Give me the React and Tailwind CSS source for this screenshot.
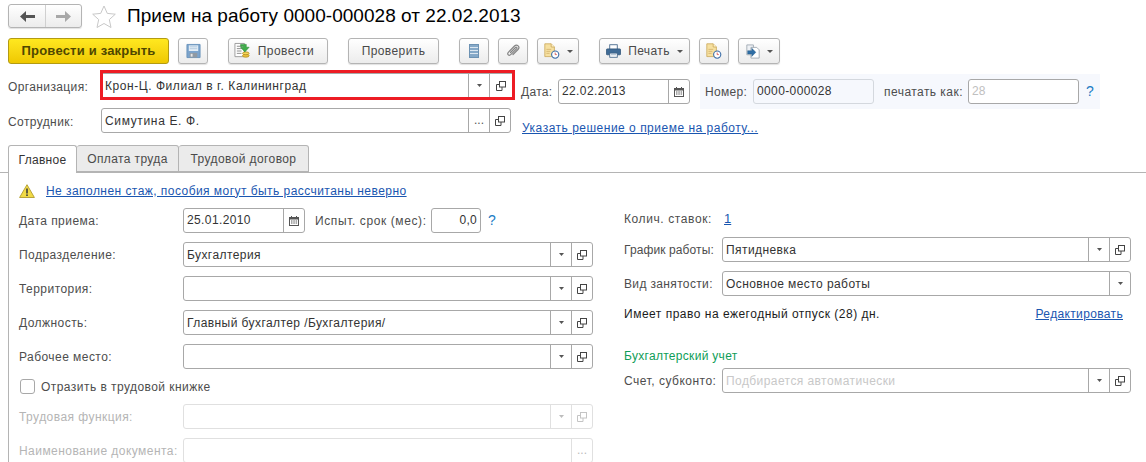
import React from 'react';

const Caret = ({ muted, big }) => (
  <svg width={big ? 6 : 5} height="3" viewBox="0 0 6 3" preserveAspectRatio="none"><path d="M0 0h6L3 3z" fill={muted ? '#bdbdbd' : '#555'} /></svg>
);

const OpenIcon = ({ muted }) => (
  <svg width="10" height="10" viewBox="0 0 10 10" fill="none" stroke={muted ? '#c4c4c4' : '#444'}>
    <rect x="3.500" y="0.500" width="6" height="5.500" />
    <path d="M3.500 3.500H.5v6h5.500V6" />
  </svg>
);

const CalendarIcon = () => (
  <svg width="10" height="10" viewBox="0 0 10 10">
    <rect x="0.500" y="1.500" width="9" height="8" fill="#fff" stroke="#555" />
    <rect x="0.500" y="1" width="9" height="2.500" fill="#555" />
    <rect x="2" y="0" width="1" height="2" fill="#555" />
    <rect x="7" y="0" width="1" height="2" fill="#555" />
    <path d="M2 5h1.500M4.300 5h1.500M6.600 5h1.500M2 7h1.500M4.300 7h1.500M6.600 7h1.500" stroke="#555" />
  </svg>
);

const Star = () => (
  <svg width="24" height="23" viewBox="0 0 24 23" fill="#fff" stroke="#c8c8c8">
    <path d="M12 1l3.300 7.400 8 .8-6 5.400 1.700 7.900L12 18.500 5 22.500l1.700-7.900-6-5.400 8-.8z" />
  </svg>
);

const SaveIcon = () => (
  <svg width="15" height="16" viewBox="0 0 16 16">
    <path d="M1 1h14v14H1z" fill="#7ba4cd" stroke="#6b94bc" />
    <rect x="3" y="2" width="10" height="6" fill="#e3edf6" />
    <path d="M4 3.500h8M4 5.500h8" stroke="#b3cade" />
    <rect x="4" y="10" width="8" height="5" fill="#8f99a3" />
    <rect x="5" y="11" width="2" height="3" fill="#e6e6e6" />
  </svg>
);

const PostIcon = () => (
  <svg width="17" height="18" viewBox="0 0 18 18">
    <path d="M1 1h10v14H1z" fill="#fff" stroke="#9a9a9a" />
    <path d="M3 4h6M3 6.500h6M3 9h5M3 11.500h5" stroke="#8a8a8a" />
    <ellipse cx="12.500" cy="14" rx="3.500" ry="1.500" fill="#f0c63a" stroke="#b9932a" />
    <ellipse cx="12.500" cy="11.500" rx="3.500" ry="1.500" fill="#f6d65a" stroke="#b9932a" />
    <path d="M7 2h6v3h3l-4.500 5L7 5h3V4H7z" fill="#3fae49" stroke="#2b8a35" strokeWidth="0.600" />
  </svg>
);

const ListIcon = () => (
  <svg width="10" height="14" viewBox="0 0 10 14">
    <rect x="0.500" y="0.500" width="9" height="13" fill="#86a9c8" stroke="#6d92b3" />
    <path d="M1 3.500h8M1 6.500h8M1 9.500h8" stroke="#dce7f1" />
  </svg>
);

const ClipIcon = () => (
  <svg width="14" height="14" viewBox="0 0 14 14" fill="none" stroke="#858585" strokeWidth="1.200" strokeLinecap="round">
    <path d="M4.500 8.500l5-5c.8-.8 2 .3 1.200 1.200l-6 6c-1.700 1.700-4-.6-2.400-2.400L8.500 2c2.500-2.500 6 1 3.500 3.500l-5 5" />
  </svg>
);

const NoteClockIcon = () => (
  <svg width="16" height="16" viewBox="0 0 20 20">
    <path d="M1 1h8l4 4v12H1z" fill="#f6e0a0" stroke="#c9a758" />
    <path d="M9 1v4h4" fill="#fff3cf" stroke="#c9a758" />
    <path d="M3 8h6M3 10.500h5M3 13h4" stroke="#d3b46e" />
    <circle cx="14" cy="14.500" r="4.500" fill="#fff" stroke="#3e6fa8" strokeWidth="1.400" />
    <path d="M14 12v2.500h2" stroke="#d2453d" fill="none" />
  </svg>
);

const PrinterIcon = () => (
  <svg width="15" height="14" viewBox="0 0 18 16">
    <rect x="4.500" y="0.500" width="9" height="6" fill="#fff" stroke="#3a5f85" />
    <rect x="0.500" y="5.500" width="17" height="7" rx="1" fill="#3f6b96" stroke="#34587c" />
    <rect x="4.500" y="10.500" width="9" height="5" fill="#fff" stroke="#3a5f85" />
    <path d="M6 12.500h6" stroke="#8fa9c2" />
  </svg>
);

const DocArrowIcon = () => (
  <svg width="14" height="15" viewBox="0 0 17 18">
    <path d="M1 1h8v12H1z" fill="#eef1f5" stroke="#9aa3ad" />
    <path d="M6 4h7l3 3v10H6z" fill="#fff" stroke="#9aa3ad" />
    <path d="M2 8h5V5l5 5-5 5v-3H2z" fill="#2f6ea5" stroke="#245a88" strokeWidth="0.500" />
  </svg>
);

const WarnIcon = () => (
  <svg width="16" height="14" viewBox="0 0 16 14">
    <path d="M8 .7 15.400 13.500H.6z" fill="#f1da45" stroke="#b9a43a" strokeLinejoin="round" />
    <rect x="7.200" y="4.500" width="1.600" height="5" fill="#3c3c3c" />
    <rect x="7.200" y="10.400" width="1.600" height="1.600" fill="#3c3c3c" />
  </svg>
);

const ToolButton = ({ className, children }) => (
  <button className={`flex h-[26px] items-center justify-center rounded-[3px] border border-[#b4b4b4] bg-gradient-to-b from-white to-[#ececec] text-[#4a4a4a] tracking-[0.4px] shadow-[0_1px_1px_rgba(0,0,0,0.12)] ${className}`}>
    {children}
  </button>
);

const Cell = ({ className = 'border-[#a8a8a8]', children }) => (
  <div className={`flex w-[21px] shrink-0 items-center justify-center border-l ${className}`}>{children}</div>
);

const Field = ({ value, placeholder, className = '', disabled, arrow = true, open = true, dots }) => {
  const line = disabled ? 'border-[#e0e0e0]' : 'border-[#a8a8a8]';
  return (
    <div className={`flex h-[25px] items-stretch rounded-[3px] border bg-white ${line} ${className}`}>
      <div className="flex-1 truncate pl-[3px] leading-[25px] text-[#333] tracking-[0.42px]">
        {value}
        {placeholder && <span className="text-[#c8c8c8]">{placeholder}</span>}
      </div>
      {arrow && <Cell className={line}><Caret muted={disabled} /></Cell>}
      {dots && <Cell className={line}><span className={`pb-[1px] ${disabled ? 'text-[#bbb]' : 'text-[#555]'}`}>...</span></Cell>}
      {open && <Cell className={line}><OpenIcon muted={disabled} /></Cell>}
    </div>
  );
};

const DateField = ({ value, className }) => (
  <div className={`flex h-[25px] items-stretch rounded-[3px] border border-[#a8a8a8] bg-white ${className}`}>
    <div className="flex-1 pl-[3px] leading-[23px] text-[#333] tracking-[0.38px]">{value}</div>
    <Cell><CalendarIcon /></Cell>
  </div>
);

const FormRow = ({ label, muted, children, className = '' }) => (
  <div className={`flex h-[25px] items-center ${className}`}>
    <span className={`w-[164px] shrink-0 tracking-[0.45px] ${muted ? 'text-[#b5b5b5]' : 'text-[#4d4d4d]'}`}>{label}</span>
    {children}
  </div>
);

const RightRow = ({ label, labelClass = 'tracking-[0.45px]', children, className = '' }) => (
  <div className={`flex h-[25px] items-center ${className}`}>
    <span className={`w-[98px] shrink-0 text-[#4d4d4d] ${labelClass}`}>{label}</span>
    {children}
  </div>
);

const Help = ({ className = '' }) => (
  <span className={`text-[14px] text-[#1c7cc4] ${className}`}>?</span>
);

export default function App() {
  return (
    <div className="h-[462px] w-[1146px] overflow-hidden bg-white font-['Liberation_Sans',Arial,sans-serif] text-[12px]">
      {/* Title */}
      <div className="flex h-[38px] pl-[8px] pt-[4px]">
        <div className="flex h-[24px] w-[74px] rounded-[3px] border border-[#b4b4b4] bg-gradient-to-b from-white to-[#ececec] shadow-[0_1px_1px_rgba(0,0,0,0.12)]">
          <div className="flex w-[37px] items-center justify-center border-r border-[#d0d0d0]">
            <svg width="15" height="11" viewBox="0 0 15 11"><path d="M6 0v4h9v3H6v4L0 5.500z" fill="#555" /></svg>
          </div>
          <div className="flex flex-1 items-center justify-center">
            <svg width="15" height="11" viewBox="0 0 15 11"><path d="M9 0v4H0v3h9v4l6-5.500z" fill="#a8a8a8" /></svg>
          </div>
        </div>
        <div className="ml-[10px] mt-[1px]"><Star /></div>
        <h1 className="ml-[11px] text-[19px] leading-[24px] text-black tracking-[0.03px]">Прием на работу 0000-000028 от 22.02.2013</h1>
      </div>

      {/* Toolbar */}
      <div className="flex h-[26px] pl-[8px]">
        <button className="h-[26px] w-[161px] rounded-[3px] border border-[#b39b12] bg-gradient-to-b from-[#ffe81f] to-[#efc800] text-[13px] font-bold text-[#4f4700] tracking-[0.2px]">Провести и закрыть</button>
        <ToolButton className="ml-[9px] w-[30px]"><SaveIcon /></ToolButton>
        <ToolButton className="ml-[20px] w-[100px] gap-[7px] pr-[8px]"><PostIcon />Провести</ToolButton>
        <ToolButton className="ml-[20px] w-[91px]">Проверить</ToolButton>
        <ToolButton className="ml-[20px] w-[30px]"><ListIcon /></ToolButton>
        <ToolButton className="ml-[9px] w-[30px]"><ClipIcon /></ToolButton>
        <ToolButton className="ml-[9px] w-[42px] gap-[7px]"><NoteClockIcon /><Caret big /></ToolButton>
        <ToolButton className="ml-[20px] w-[91px] gap-[7px]"><PrinterIcon />Печать<Caret big /></ToolButton>
        <ToolButton className="ml-[9px] w-[30px]"><NoteClockIcon /></ToolButton>
        <ToolButton className="ml-[9px] w-[42px] gap-[7px]"><DocArrowIcon /><Caret big /></ToolButton>
      </div>

      {/* Header fields */}
      <div className="mt-[6px] flex pl-[8px]">
        <div className="w-[507px]">
          <div className="flex h-[30px] items-center">
            <span className="w-[92px] pt-[4px] tracking-[0.38px] text-[#4d4d4d]">Организация:</span>
            <div className="w-[415px] border-[3px] border-[#ed1c24]">
              <div className="flex h-[24px] items-stretch border-t border-[#a8a8a8] bg-white">
                <div className="flex-1 pl-[2px] leading-[25px] text-[#333] tracking-[0.55px]">Крон-Ц. Филиал в г. Калининград</div>
                <Cell><Caret /></Cell>
                <div className="flex w-[23px] shrink-0 items-center justify-center border-l border-[#a8a8a8]"><OpenIcon /></div>
              </div>
            </div>
          </div>
          <div className="mt-[8px] flex h-[25px] items-center">
            <span className="w-[93px] pt-[2px] tracking-[0.4px] text-[#4d4d4d]">Сотрудник:</span>
            <Field value={<span className="tracking-[0.65px]">Симутина Е. Ф.</span>} arrow={false} dots className="w-[410px]" />
          </div>
        </div>
        <div className="ml-[6px] flex-1">
          <div className="flex">
            <div className="flex h-[35px] items-center self-end">
              <span className="w-[37px] tracking-[0.3px] text-[#4d4d4d]">Дата:</span>
              <DateField value="22.02.2013" className="w-[132px]" />
            </div>
            <div className="ml-[10px] mt-[4px] flex h-[35px] w-[400px] items-center bg-[#f6f8fd] pl-[5px]">
              <span className="w-[48px] tracking-[0.3px] text-[#4d4d4d]">Номер:</span>
              <div className="h-[25px] w-[121px] rounded-[3px] border border-[#d4d8de] pl-[3px] leading-[23px] text-[#333] tracking-[0.38px]">0000-000028</div>
              <span className="ml-[10px] w-[84px] tracking-[0.45px] text-[#4d4d4d]">печатать как:</span>
              <div className="h-[25px] w-[111px] rounded-[3px] border border-[#a8a8a8] bg-white pl-[3px] leading-[23px] text-[#c0c0c0]">28</div>
              <Help className="ml-[7px]" />
            </div>
          </div>
          <a className="mt-[12px] block pl-px leading-[14px] text-[#1a56b0] underline tracking-[0.5px]">Указать решение о приеме на работу...</a>
        </div>
      </div>

      {/* Tabs */}
      <div className="mt-[10px] flex h-[28px] items-stretch border-b border-[#b4b4b4] pl-[8px]">
        <div className="z-10 -mb-px flex w-[69px] items-center justify-center rounded-t-[3px] border border-b-0 border-[#b4b4b4] bg-white text-[#333] tracking-[0.3px]">Главное</div>
        <div className="flex w-[102px] items-center justify-center rounded-t-[3px] border border-l-0 border-[#b4b4b4] bg-[#ebebeb] text-[#4a4a4a] tracking-[0.38px]">Оплата труда</div>
        <div className="flex w-[130px] items-center justify-center rounded-t-[3px] border border-l-0 border-[#b4b4b4] bg-[#ebebeb] text-[#4a4a4a] tracking-[0.4px]">Трудовой договор</div>
      </div>

      {/* Tab body */}
      <div className="ml-[8px] h-[300px] border-l border-[#b4b4b4] pl-[10px]">
        <div className="flex h-[35px] items-center">
          <WarnIcon />
          <a className="ml-[11px] text-[#1a56b0] underline tracking-[0.45px]">Не заполнен стаж, пособия могут быть рассчитаны неверно</a>
        </div>
        <div className="flex">
          <div className="w-[574px]">
            <FormRow label="Дата приема:">
              <DateField value="25.01.2010" className="w-[122px]" />
              <span className="ml-[10px] w-[116px] tracking-[0.6px] text-[#4d4d4d]">Испыт. срок (мес):</span>
              <div className="h-[25px] w-[50px] rounded-[3px] border border-[#a8a8a8] pr-[3px] text-right leading-[23px] text-[#333] tracking-[0.3px]">0,0</div>
              <Help className="ml-[7px]" />
            </FormRow>
            <FormRow label="Подразделение:" className="mt-[9px]"><Field value="Бухгалтерия" className="w-[410px]" /></FormRow>
            <FormRow label="Территория:" className="mt-[9px]"><Field className="w-[410px]" /></FormRow>
            <FormRow label="Должность:" className="mt-[9px]"><Field value="Главный бухгалтер /Бухгалтерия/" className="w-[410px]" /></FormRow>
            <FormRow label="Рабочее место:" className="mt-[9px]"><Field className="w-[410px]" /></FormRow>
            <div className="mt-[10px] flex h-[15px] items-center">
              <div className="ml-[1px] h-[15px] w-[15px] rounded-[3px] border border-[#a8a8a8] bg-white" />
              <span className="ml-[6px] tracking-[0.45px] text-[#4d4d4d]">Отразить в трудовой книжке</span>
            </div>
            <FormRow label="Трудовая функция:" muted className="mt-[10px]"><Field disabled className="w-[410px]" /></FormRow>
            <FormRow label="Наименование документа:" muted className="mt-[9px]"><Field disabled arrow={false} open={false} dots className="w-[411px]" /></FormRow>
          </div>
          <div className="ml-[31px] w-[507px]">
            <div className="flex h-[21px] items-center">
              <span className="w-[100px] tracking-[0.6px] text-[#4d4d4d]">Колич. ставок:</span>
              <a className="text-[13px] text-[#1a56b0] underline">1</a>
            </div>
            <RightRow label="График работы:" labelClass="tracking-[0.1px]" className="mt-[8px]"><Field value="Пятидневка" className="w-[409px]" /></RightRow>
            <RightRow label="Вид занятости:" labelClass="tracking-[0.35px]" className="mt-[9px]"><Field value="Основное место работы" open={false} className="w-[409px]" /></RightRow>
            <div className="mt-[10px] flex h-[16px] items-center justify-between pr-[8px]">
              <span className="text-[#1c1c1c] tracking-[0.5px]">Имеет право на ежегодный отпуск (28) дн.</span>
              <a className="text-[#1a56b0] underline tracking-[0.35px]">Редактировать</a>
            </div>
            <div className="mt-[26px] h-[16px] leading-[16px] text-[#0f9d58] tracking-[0.3px]">Бухгалтерский учет</div>
            <RightRow label="Счет, субконто:" labelClass="tracking-[0.5px]" className="mt-[4px]"><Field placeholder="Подбирается автоматически" className="w-[409px]" /></RightRow>
          </div>
        </div>
      </div>
    </div>
  );
}
